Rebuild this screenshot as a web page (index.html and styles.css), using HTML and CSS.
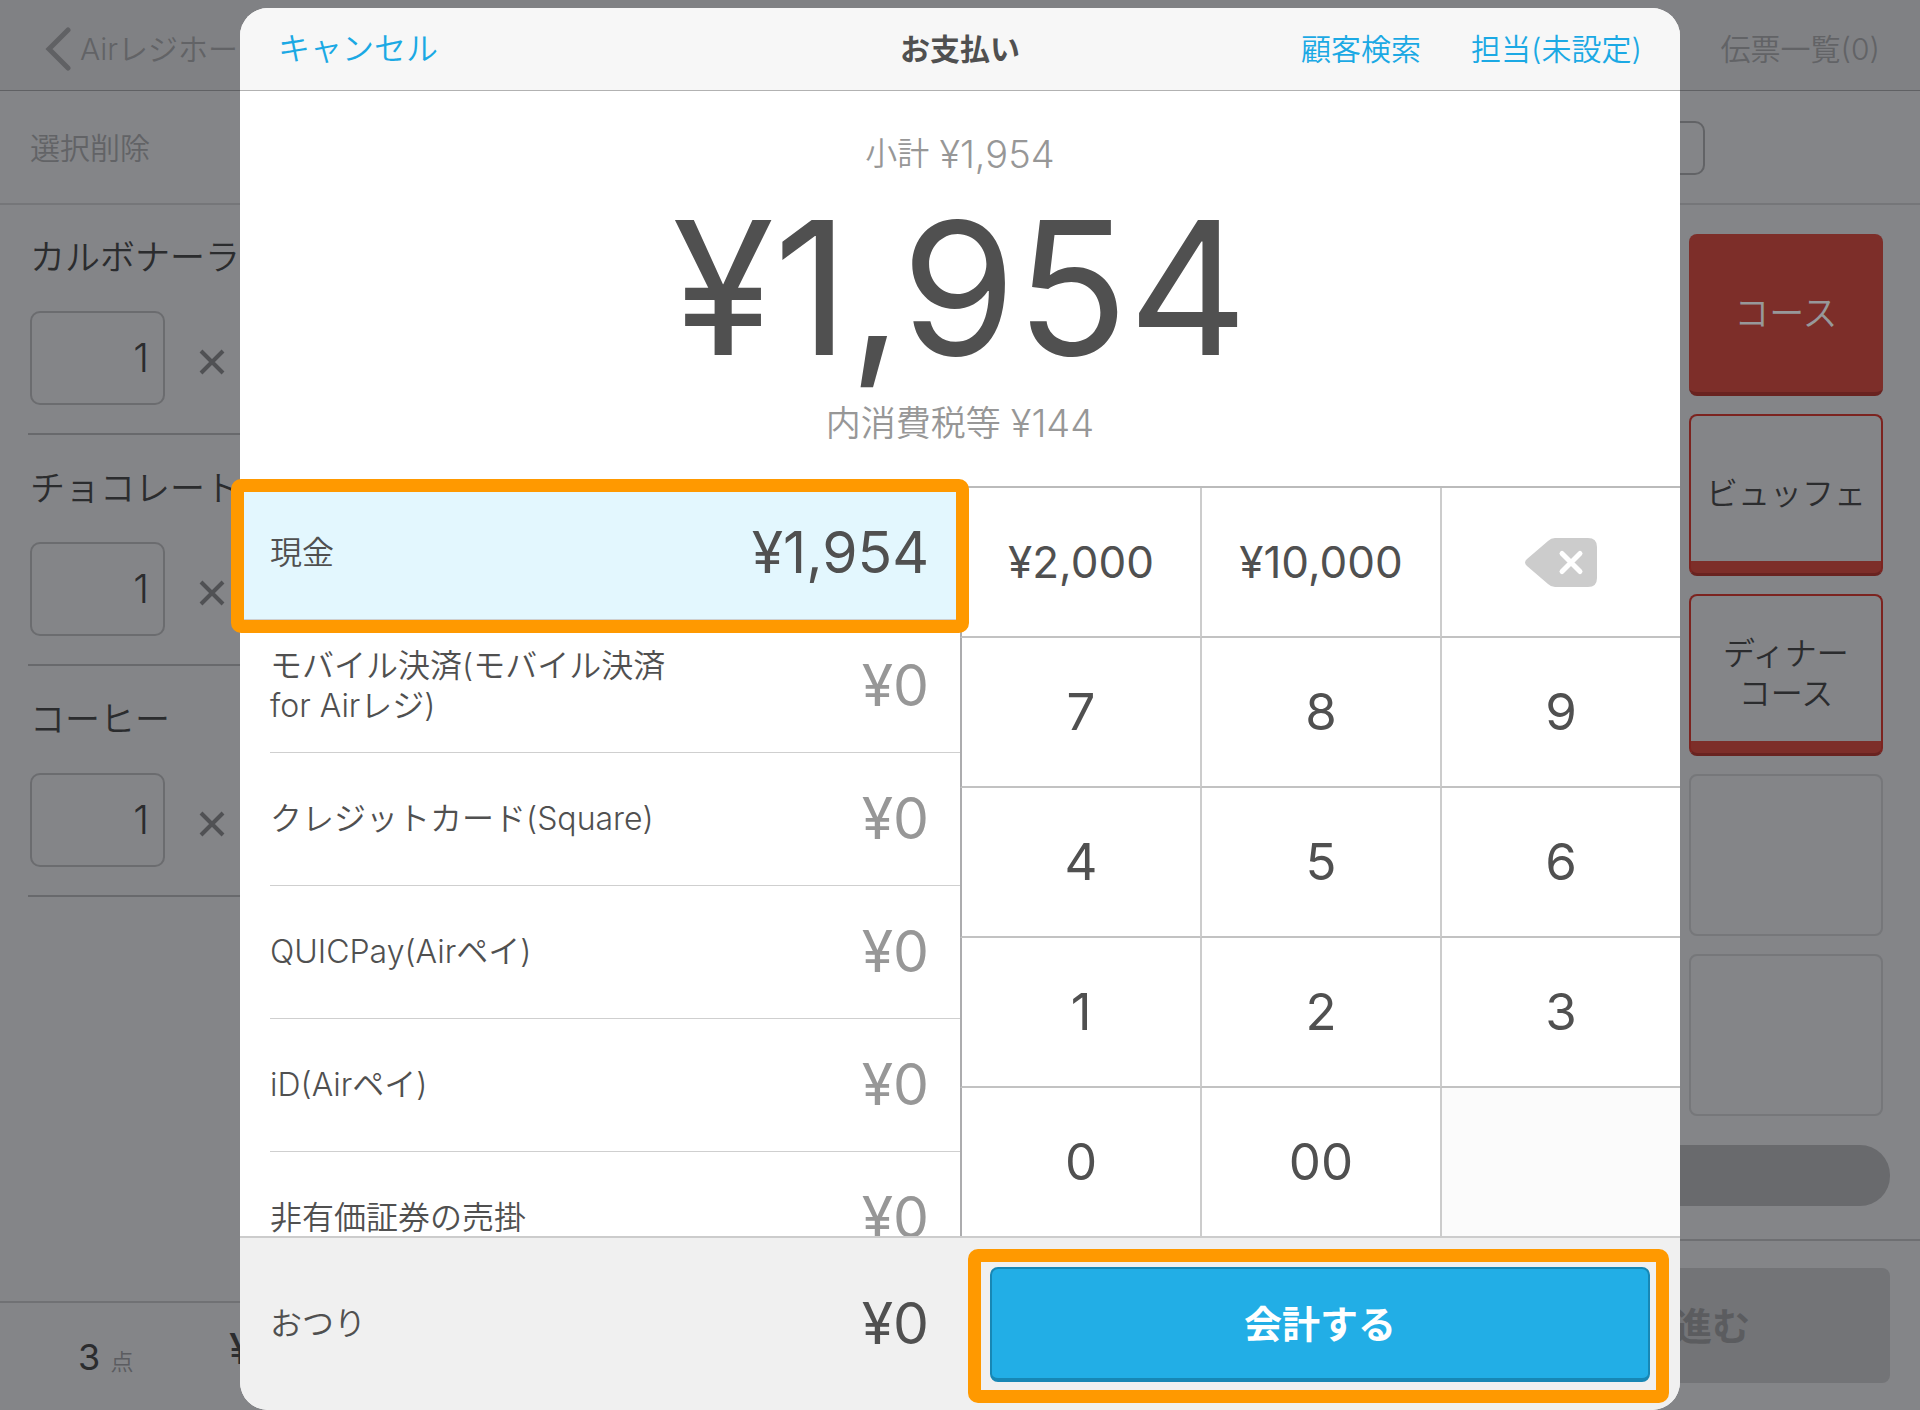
FILE: index.html
```html
<!DOCTYPE html>
<html lang="ja">
<head>
<meta charset="utf-8">
<meta name="viewport" content="width=device-width, initial-scale=1">
<title>お支払い</title>
<link rel="stylesheet" href="styles.css">
</head>
<body>
<div class="screen">
  <div class="app">
    <header class="app-header">
      <a class="back" href="#">
        <svg class="back-icon" viewBox="0 0 26 44" aria-hidden="true"><path d="M23 3 L4 22 L23 41"/></svg>
        <span>Airレジホー</span>
      </a>
      <a class="slips" href="#">伝票一覧(0)</a>
    </header>
    <div class="toolbar">
      <button class="clear" type="button">選択削除</button>
      <input class="search" type="search" aria-label="検索">
    </div>
    <div class="panes">
      <section class="order">
        <ul class="items">
          <li class="item">
            <label class="item-name" for="qty1">カルボナーラ</label>
            <div class="item-qty"><input class="qty" id="qty1" value="1"><svg class="times" viewBox="0 0 26 26" aria-hidden="true"><path d="M2 2 L24 24 M24 2 L2 24"/></svg></div>
          </li>
          <li class="item">
            <label class="item-name" for="qty2">チョコレート</label>
            <div class="item-qty"><input class="qty" id="qty2" value="1"><svg class="times" viewBox="0 0 26 26" aria-hidden="true"><path d="M2 2 L24 24 M24 2 L2 24"/></svg></div>
          </li>
          <li class="item">
            <label class="item-name" for="qty3">コーヒー</label>
            <div class="item-qty"><input class="qty" id="qty3" value="1"><svg class="times" viewBox="0 0 26 26" aria-hidden="true"><path d="M2 2 L24 24 M24 2 L2 24"/></svg></div>
          </li>
        </ul>
        <footer class="order-footer">
          <p class="count">3 <span class="unit">点</span></p>
          <p class="order-total">¥</p>
        </footer>
      </section>
      <section class="catalog">
        <div class="tiles">
          <button class="tile tile-active" type="button">コース</button>
          <button class="tile tile-red" type="button">ビュッフェ</button>
          <button class="tile tile-red" type="button">ディナー<br>コース</button>
          <div class="tile"></div>
          <div class="tile"></div>
        </div>
        <div class="pager"></div>
        <footer class="catalog-footer">
          <button class="proceed" type="button" disabled>進む</button>
        </footer>
      </section>
    </div>
  </div>

  <div class="dialog" role="dialog" aria-labelledby="dialog-title">
    <header class="dialog-header">
      <button class="link link-cancel" type="button">キャンセル</button>
      <h1 class="title" id="dialog-title">お支払い</h1>
      <div class="header-actions">
        <button class="link" type="button">顧客検索</button>
        <button class="link" type="button">担当(未設定)</button>
      </div>
    </header>
    <section class="amount">
      <p class="amount-line"><span class="subtotal-label">小計</span><span>¥1,954</span></p>
      <p class="amount-total">¥1,954</p>
      <p class="amount-line"><span class="tax-label">内消費税等</span><span>¥144</span></p>
    </section>
    <div class="entry">
      <div class="methods">
        <ul class="method-list">
          <li><button class="method method-selected" type="button"><span class="method-name">現金</span><span class="method-sum">¥1,954</span></button></li>
          <li><button class="method" type="button"><span class="method-name">モバイル決済(モバイル決済<br>for Airレジ)</span><span class="method-sum">¥0</span></button></li>
          <li><button class="method" type="button"><span class="method-name">クレジットカード(Square)</span><span class="method-sum">¥0</span></button></li>
          <li><button class="method" type="button"><span class="method-name">QUICPay(Airペイ)</span><span class="method-sum">¥0</span></button></li>
          <li><button class="method" type="button"><span class="method-name">iD(Airペイ)</span><span class="method-sum">¥0</span></button></li>
          <li><button class="method" type="button"><span class="method-name">非有価証券の売掛</span><span class="method-sum">¥0</span></button></li>
        </ul>
        <div class="marker"></div>
      </div>
      <div class="keypad">
        <button class="key key-cash" type="button">¥2,000</button>
        <button class="key key-cash" type="button">¥10,000</button>
        <button class="key" type="button" aria-label="削除">
          <svg class="erase" viewBox="0 0 72 49" aria-hidden="true"><path class="erase-body" d="M30 0 H63 Q72 0 72 9 V40 Q72 49 63 49 H30 Q26 49 23 46 L2 28 Q-2 24.500 2 21 L23 3 Q26 0 30 0 Z"/><path class="erase-cross" d="M37 15.500 L55 33.500 M55 15.500 L37 33.500"/></svg>
        </button>
        <button class="key" type="button">7</button>
        <button class="key" type="button">8</button>
        <button class="key" type="button">9</button>
        <button class="key" type="button">4</button>
        <button class="key" type="button">5</button>
        <button class="key" type="button">6</button>
        <button class="key" type="button">1</button>
        <button class="key" type="button">2</button>
        <button class="key" type="button">3</button>
        <button class="key" type="button">0</button>
        <button class="key" type="button">00</button>
        <div class="key key-blank"></div>
      </div>
    </div>
    <footer class="dialog-footer">
      <p class="change"><span class="method-name">おつり</span><span class="change-sum">¥0</span></p>
      <div class="checkout-frame"><button class="checkout" type="button">会計する</button></div>
    </footer>
  </div>
</div>
</body>
</html>
```
FILE: styles.css
```css
* { box-sizing: border-box; }

body {
  margin: 0;
  background: #848588;
  color: #505050;
  font-family: "Inter", "Noto Sans CJK JP", sans-serif;
  font-size: 32px;
  line-height: 40px;
}

p, h1, ul { margin: 0; padding: 0; }
ul { list-style: none; }
a { color: inherit; text-decoration: none; }

button, input {
  margin: 0;
  padding: 0;
  border: 0;
  background: none;
  color: inherit;
  font: inherit;
}

/* The dialog shares one grid cell with the register behind it */
.screen {
  display: grid;
  min-height: 100vh;
  overflow: hidden;
}

.app, .dialog { grid-area: 1 / 1; }

/* Dimmed register */
.app {
  display: flex;
  flex-direction: column;
  min-width: 0;
  color: #2b2c2e;
  font-weight: 350;
}

.app-header {
  display: flex;
  align-items: center;
  justify-content: space-between;
  height: 91px;
  padding: 7px 40px 0 45px;
  border-bottom: 1px solid #606164;
  background: #808184;
  color: #626366;
  font-size: 30px;
}

.back { display: flex; align-items: center; gap: 9px; }
.back-icon { width: 26px; height: 44px; fill: none; stroke: #606164; stroke-width: 5; stroke-linecap: round; }

.toolbar {
  display: flex;
  align-items: center;
  justify-content: space-between;
  height: 114px;
  padding: 2px 215px 0 30px;
  border-bottom: 2px solid #757679;
}

.clear { color: #626366; font-size: 30px; }
.search { width: 400px; height: 54px; border: 2px solid #626366; border-radius: 10px; }

.panes { display: flex; flex: 1; }
.order, .catalog { display: flex; flex: 1; flex-direction: column; }
.items { flex: 1; padding-left: 28px; }
.item { height: 231px; padding-top: 33px; border-bottom: 2px solid #68696c; }
.item:first-child { height: 230px; padding-top: 32px; }
.item-name { display: block; padding-left: 2px; font-size: 35px; }
.item-qty { display: flex; align-items: center; gap: 34px; margin-top: 34px; padding-left: 2px; }

.qty {
  width: 135px;
  height: 94px;
  padding: 0 14px 2px 0;
  border: 2px solid #6b6c6f;
  border-radius: 10px;
  font-size: 40px;
  text-align: right;
}

.times { width: 26px; height: 26px; margin-top: 8px; fill: none; stroke: #505154; stroke-width: 4; }

.order-footer {
  display: flex;
  height: 109px;
  padding: 26px 0 0 78px;
  border-top: 2px solid #707174;
  font-weight: 400;
}

.count { width: 151px; padding-top: 8px; font-size: 36px; }
.unit { color: #5b5c60; font-size: 23px; font-weight: 350; line-height: 1; }
.order-total { font-size: 42px; font-weight: 500; }

.catalog { align-items: flex-end; }
.tiles { display: grid; gap: 18px; padding: 29px 37px 29px; }

.tile {
  width: 194px;
  height: 162px;
  border: 2px solid #76777a;
  border-radius: 8px;
  text-align: center;
}

.tile-red {
  padding-bottom: 2px;
  border-color: #7c231f;
  border-bottom: 3px solid #692320;
  background: linear-gradient(#7d2e29, #7d2e29) bottom / 100% 12px no-repeat;
}

.tile-active {
  border: 0;
  border-bottom: 4px solid #692320;
  background: #7d2e29;
  color: #97989a;
  font-size: 35px;
}

.pager { width: 900px; max-width: 94%; height: 61px; margin-right: 30px; border-radius: 30px; background: #696a6d; }

.catalog-footer {
  align-self: stretch;
  margin-top: 33px;
  padding: 27px 30px;
  border-top: 2px solid #6e6f72;
}

.proceed {
  display: block;
  width: 100%;
  height: 115px;
  padding-right: 140px;
  border-radius: 8px;
  background: #737477;
  color: #5b5c5f;
  font-size: 38px;
  font-weight: 700;
  text-align: right;
}

/* Payment dialog */
.dialog {
  z-index: 1;
  justify-self: center;
  display: flex;
  flex-direction: column;
  width: 75%;
  margin-top: 8px;
  border-radius: 28px;
  background: #fff;
}

.dialog-header {
  display: grid;
  grid-template-columns: 1fr auto 1fr;
  align-items: center;
  height: 83px;
  padding: 0 38px;
  border-bottom: 1px solid #b2b2b2;
  border-radius: 28px 28px 0 0;
  background: #f7f7f7;
  font-size: 30px;
}

.link { justify-self: start; color: #1ba9e4; font-weight: 350; }
.link-cancel { font-size: 32px; }
.title { font-size: 30px; font-weight: 700; line-height: 40px; }
.header-actions { display: flex; gap: 50px; justify-self: end; }

.amount {
  padding: 39px 0;
  border-bottom: 2px solid #bbb;
  text-align: center;
}

.amount-line {
  display: flex;
  align-items: center;
  justify-content: center;
  gap: 10px;
  color: #979797;
  font-size: 38px;
  font-weight: 350;
  line-height: 48px;
}

.subtotal-label { font-size: 32px; }
.tax-label { font-size: 35px; }
.amount-total { margin: 10px 0 11px; font-size: 185px; line-height: 200px; }

.entry { display: grid; grid-template-columns: 1fr 1fr; }
.methods { position: relative; }

.method-list { height: 0; min-height: 100%; overflow: hidden; }
.method-list li { height: 133px; padding-left: 30px; }
.method-list li:first-child { height: 132px; padding-left: 0; }

.method {
  display: flex;
  align-items: center;
  justify-content: space-between;
  width: 100%;
  height: 100%;
  padding: 0 31px 1px 0;
  border-bottom: 1px solid #cfcfcf;
  text-align: left;
}

.method-selected { padding-left: 30px; background: #e3f7fe; }
.method-name { font-weight: 350; }
.method-sum { color: #979797; font-size: 57px; }
.method-selected .method-sum { color: #505050; }

.marker {
  position: absolute;
  z-index: 2;
  top: -9px;
  right: -9px;
  left: -9px;
  height: 154px;
  border: 13px solid #ff9900;
  border-radius: 10px;
}

.keypad {
  display: grid;
  grid-template-columns: repeat(3, 1fr);
  grid-template-rows: repeat(4, 150px) 148px;
}

.key {
  display: grid;
  place-items: center;
  border-bottom: 2px solid #c2c2c2;
  border-left: 2px solid #ccc;
  font-size: 51px;
}

.key:nth-child(3n + 1) { border-left-color: #acacae; }
.key:nth-child(n + 13) { border-bottom: 0; }
.key-cash { font-size: 44px; }
.key-blank { background: #fbfbfb; }
.erase { width: 72px; height: 49px; }
.erase-body { fill: #ccc; }
.erase-cross { fill: none; stroke: #fff; stroke-width: 5; stroke-linecap: round; }

.dialog-footer {
  display: grid;
  grid-template-columns: 1fr 1fr;
  border-top: 2px solid #ccc;
  border-radius: 0 0 28px 28px;
  background: #f0f0f0;
}

.change { display: flex; align-items: center; justify-content: space-between; padding: 0 31px 0 30px; }
.change-sum { font-size: 57px; }

.checkout-frame {
  height: 154px;
  margin: 11px 11px 7px 8px;
  padding: 5px 6px 8px 9px;
  border: 13px solid #ff9900;
  border-radius: 10px;
}

.checkout {
  width: 100%;
  height: 115px;
  border: 2px solid #1787b5;
  border-bottom-width: 4px;
  border-radius: 8px;
  background: #22aee6;
  color: #fff;
  font-size: 38px;
  font-weight: 700;
}
```
